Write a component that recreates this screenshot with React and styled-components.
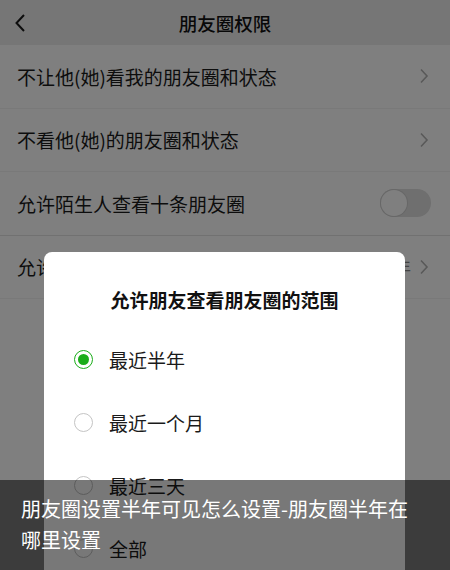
import React from "react";
import styled, { createGlobalStyle } from "styled-components";

const GlobalStyle = createGlobalStyle`
  html, body {
    margin: 0;
    padding: 0;
    width: 450px;
    height: 570px;
    overflow: hidden;
    background: #ffffff;
    font-family: "Noto Sans CJK SC", "Noto Sans", sans-serif;
  }
  * { box-sizing: border-box; }
`;

const Page = styled.div`
  position: relative;
  width: 450px;
  height: 570px;
  overflow: hidden;
  background: #ffffff;
`;

const Header = styled.div`
  height: 45px;
  background: #ededed;
  display: flex;
  align-items: center;
  justify-content: center;
  position: relative;
  font-size: 18.5px;
  font-weight: 500;
  color: #111;
`;

const BackButton = styled.div`
  position: absolute;
  left: 14px;
  top: 0;
  height: 45px;
  display: flex;
  align-items: center;
`;

const Row = styled.div`
  height: 63.5px;
  display: flex;
  align-items: center;
  padding: 0 17px;
  border-bottom: 1px solid ${(p) => (p.$strong ? "#e2e2e2" : "#f2f2f2")};
  font-size: 19px;
  color: #1a1a1a;
  background: #fff;
`;

const RowLabel = styled.span`
  flex: 1;
  white-space: nowrap;
`;

const RowValue = styled.span`
  color: #888;
  font-size: 17px;
  margin-right: 8px;
`;

const Chevron = () => (
  <svg width="10" height="16" viewBox="0 0 10 16" style={{ marginRight: 4 }}>
    <path d="M2 1.5 L8 8 L2 14.5" fill="none" stroke="#b2b2b2" strokeWidth="1.6" />
  </svg>
);

const Toggle = styled.div`
  width: 51px;
  height: 28px;
  border-radius: 14px;
  background: #dedede;
  position: relative;
  margin-right: 2px;
`;

const Knob = styled.div`
  position: absolute;
  left: 1px;
  top: 1px;
  width: 26px;
  height: 26px;
  border-radius: 50%;
  background: #fff;
  box-shadow: 0 0 0 1px #cfcfcf;
`;

const Mask = styled.div`
  position: absolute;
  inset: 0;
  background: rgba(0, 0, 0, 0.5);
`;

const Dialog = styled.div`
  position: absolute;
  left: 44px;
  top: 252px;
  width: 361px;
  height: 340px;
  background: #fff;
  border-radius: 8px;
  display: flex;
  flex-direction: column;
`;

const DialogTitle = styled.div`
  text-align: center;
  font-size: 19px;
  font-weight: 700;
  color: #111;
  padding-top: 34px;
  height: 76px;
`;

const Option = styled.div`
  height: 63px;
  display: flex;
  align-items: center;
  padding-left: 30px;
  font-size: 19px;
  color: #1a1a1a;
`;

const Radio = styled.span`
  width: 19px;
  height: 19px;
  border-radius: 50%;
  border: 1.5px solid ${(p) => (p.$checked ? "#1aad19" : "#c4c4c4")};
  display: flex;
  align-items: center;
  justify-content: center;
  margin-right: 16px;

  &::after {
    content: "";
    width: 11px;
    height: 11px;
    border-radius: 50%;
    background: ${(p) => (p.$checked ? "#1aad19" : "transparent")};
  }
`;

const Caption = styled.div`
  position: absolute;
  left: 0;
  right: 0;
  bottom: 0;
  height: 90px;
  background: rgba(0, 0, 0, 0.53);
  color: #fff;
  font-size: 20px;
  line-height: 31px;
  padding: 13px 34px 0 21px;
`;

const options = ["最近半年", "最近一个月", "最近三天", "全部"];

export default function App() {
  return (
    <Page>
      <GlobalStyle />
      <Header>
        <BackButton>
          <svg width="12" height="20" viewBox="0 0 12 20">
            <path d="M10 2 L2.5 10 L10 18" fill="none" stroke="#1a1a1a" strokeWidth="2" />
          </svg>
        </BackButton>
        朋友圈权限
      </Header>
      <Row>
        <RowLabel>不让他(她)看我的朋友圈和状态</RowLabel>
        <Chevron />
      </Row>
      <Row>
        <RowLabel>不看他(她)的朋友圈和状态</RowLabel>
        <Chevron />
      </Row>
      <Row $strong>
        <RowLabel>允许陌生人查看十条朋友圈</RowLabel>
        <Toggle>
          <Knob />
        </Toggle>
      </Row>
      <Row>
        <RowLabel>允许朋友查看朋友圈的范围</RowLabel>
        <RowValue>最近半年</RowValue>
        <Chevron />
      </Row>
      <Mask />
      <Dialog>
        <DialogTitle>允许朋友查看朋友圈的范围</DialogTitle>
        {options.map((o, i) => (
          <Option key={o}>
            <Radio $checked={i === 0} />
            {o}
          </Option>
        ))}
      </Dialog>
      <Caption>朋友圈设置半年可见怎么设置-朋友圈半年在哪里设置</Caption>
    </Page>
  );
}
